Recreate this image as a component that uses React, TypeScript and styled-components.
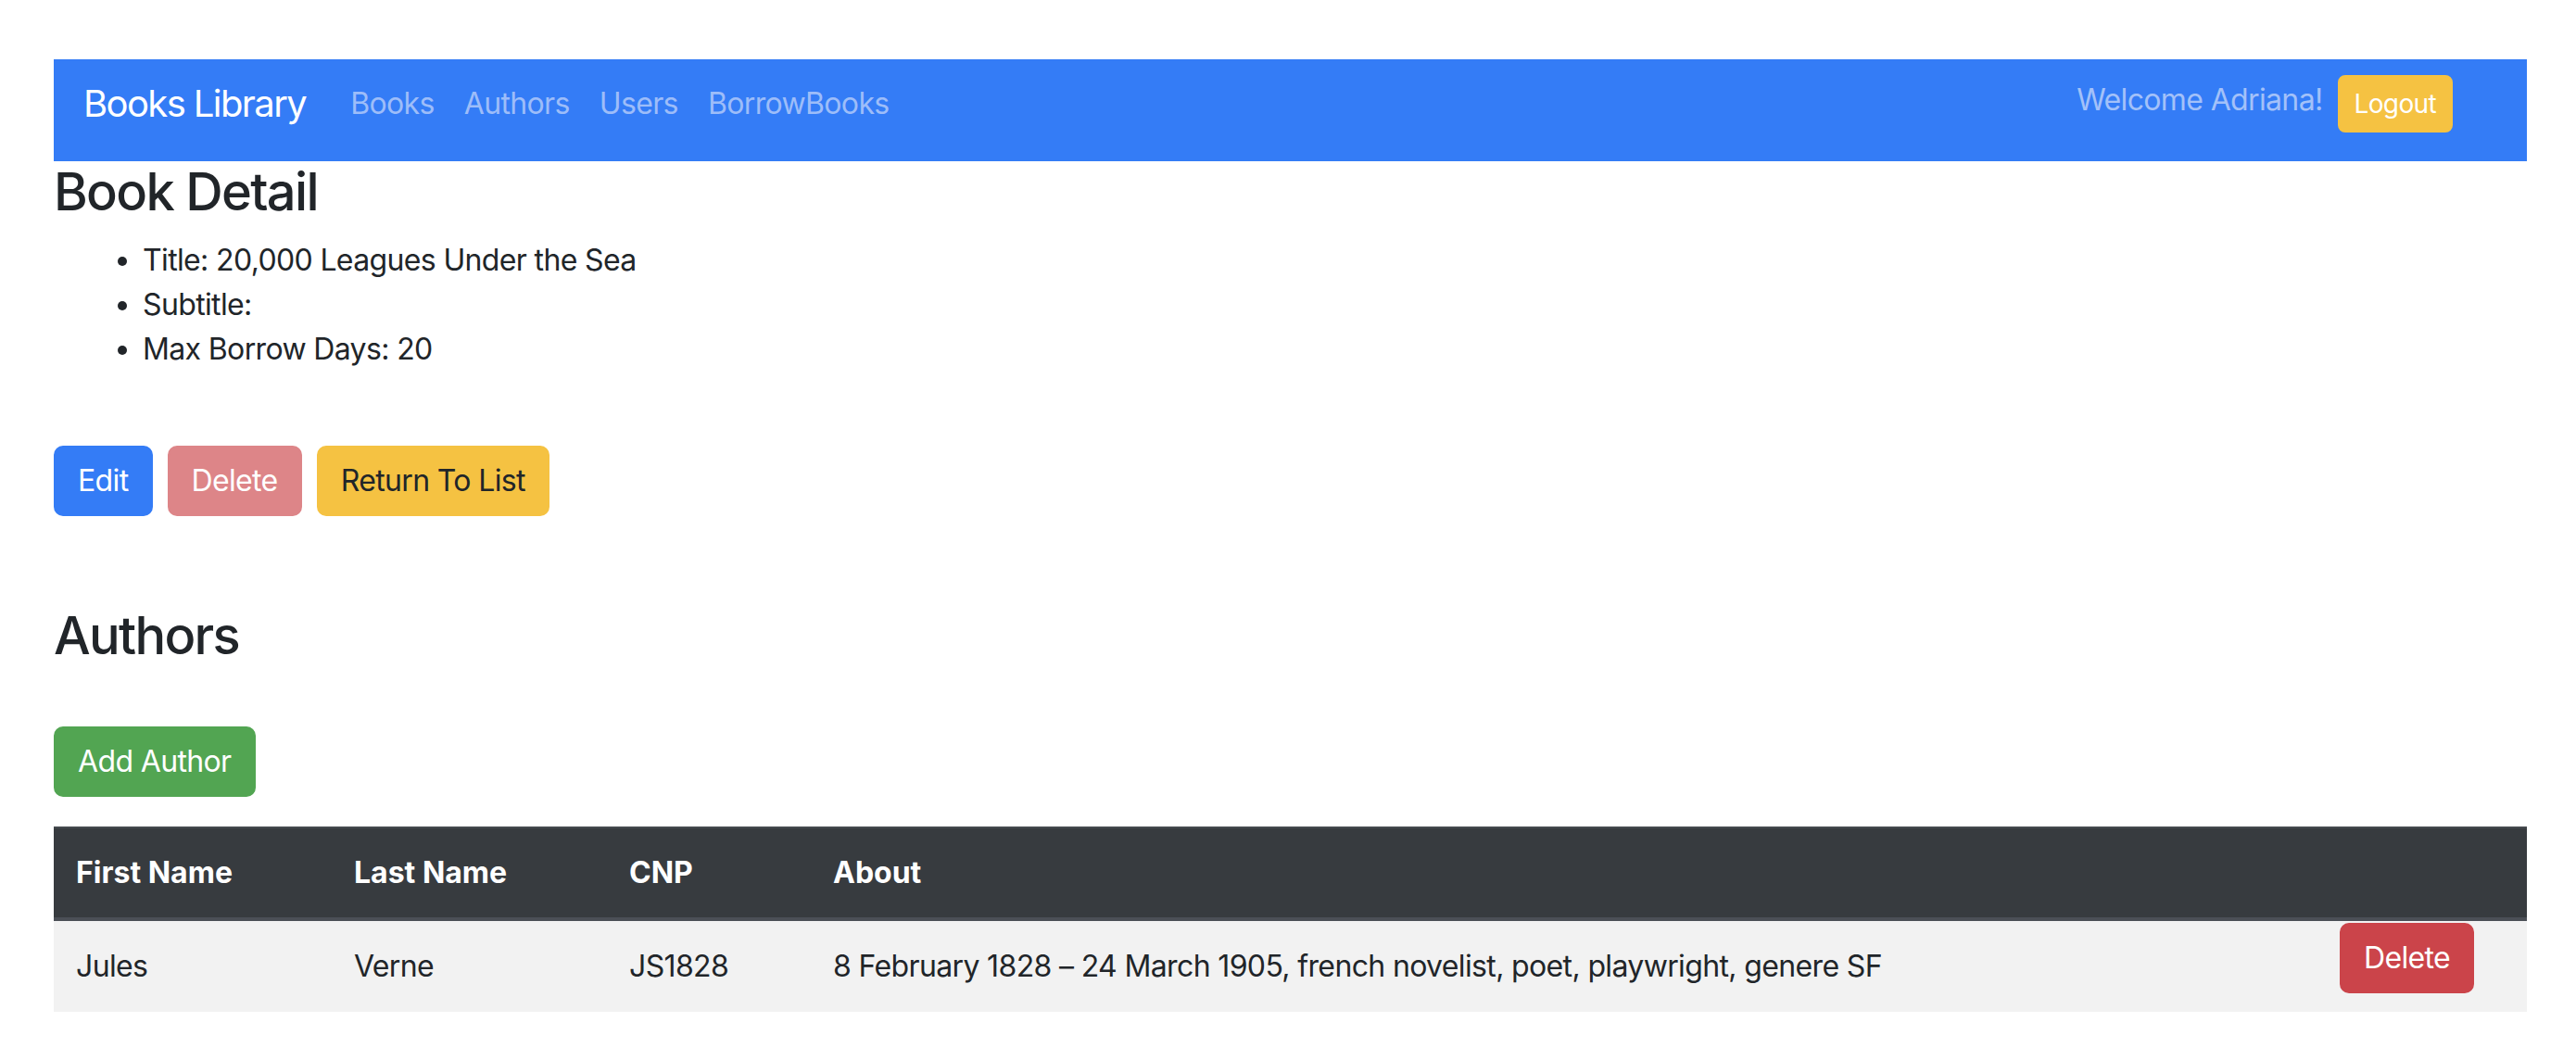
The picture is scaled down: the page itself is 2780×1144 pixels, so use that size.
import React from "react";
import styled, { createGlobalStyle } from "styled-components";

const GlobalStyle = createGlobalStyle`
  html, body { margin: 0; padding: 0; background: #ffffff; }
  body {
    font-family: Inter, "Noto Sans", "Liberation Sans", sans-serif;
    font-size: 32px;
    line-height: 1.5;
    color: #212529;
    letter-spacing: -0.02em;
  }
  * { box-sizing: border-box; }
`;

const Page = styled.div`
  padding: 64px 53px 40px 58px;
`;

const NavBar = styled.nav`
  height: 110px;
  background: #347cf6;
  display: flex;
  align-items: center;
  padding: 0 80px 14px 32px;
`;

const Brand = styled.a`
  font-size: 40px;
  line-height: 60px;
  letter-spacing: -0.04em;
  color: #ffffff;
  margin-right: 32px;
  text-decoration: none;
  white-space: nowrap;
`;

const NavList = styled.div`
  display: flex;
  align-items: center;
`;

const NavLink = styled.a`
  font-size: 32px;
  line-height: 48px;
  padding: 0 16px;
  color: #9dbdf9;
  text-decoration: none;
  white-space: nowrap;
`;

const NavRight = styled.div`
  margin-left: auto;
  display: flex;
  align-items: center;
  gap: 16px;
`;

const Welcome = styled.span`
  font-size: 32px;
  line-height: 48px;
  color: #a3c1f9;
  margin-bottom: 9px;
  white-space: nowrap;
`;

const Heading = styled.h3<{ $mb?: number }>`
  font-size: 56px;
  font-weight: 500;
  line-height: 1.2;
  letter-spacing: -0.03em;
  margin: 0 0 ${(p) => p.$mb ?? 16}px 0;
`;

const DetailList = styled.ul`
  margin: 0 0 80px 0;
  padding-left: 96px;
  list-style: disc;
`;

const ButtonRow = styled.div`
  display: flex;
  gap: 16px;
  margin-bottom: 96px;
`;

type Variant = "primary" | "dangerFaded" | "warning" | "success" | "danger" | "warningSm";

const variants: Record<Variant, { bg: string; fg: string }> = {
  primary: { bg: "#347cf6", fg: "#ffffff" },
  dangerFaded: { bg: "#dd8588", fg: "#ffffff" },
  warning: { bg: "#f5c242", fg: "#212529" },
  success: { bg: "#52a552", fg: "#ffffff" },
  danger: { bg: "#cb444a", fg: "#ffffff" },
  warningSm: { bg: "#f5c242", fg: "#ffffff" },
};

const Button = styled.button<{ $variant: Variant; $small?: boolean }>`
  font-family: inherit;
  letter-spacing: inherit;
  font-size: ${(p) => (p.$small ? 28 : 32)}px;
  line-height: ${(p) => (p.$small ? 42 : 48)}px;
  padding: ${(p) => (p.$small ? "8px 16px" : "12px 24px")};
  border: 2px solid ${(p) => variants[p.$variant].bg};
  border-radius: ${(p) => (p.$small ? 8 : 10)}px;
  background: ${(p) => variants[p.$variant].bg};
  color: ${(p) => variants[p.$variant].fg};
  white-space: nowrap;
  cursor: pointer;
`;

const AddRow = styled.div`
  margin: 64px 0 32px 0;
`;

const Table = styled.table`
  width: 100%;
  border-collapse: collapse;
  table-layout: fixed;
`;

const HeadRow = styled.tr`
  background: #373b3f;
  border-top: 2px solid #45494e;
  border-bottom: 4px solid #4b4f56;
`;

const Th = styled.th<{ $w?: number }>`
  ${(p) => (p.$w ? `width: ${p.$w}px;` : "")}
  text-align: left;
  font-weight: 700;
  letter-spacing: 0;
  color: #ffffff;
  padding: 24px;
  line-height: 48px;
  vertical-align: middle;
`;

const BodyRow = styled.tr`
  background: #f2f2f2;
`;

const Td = styled.td`
  padding: 24px;
  line-height: 48px;
  vertical-align: middle;
  color: #212529;
`;

const ActionTd = styled.td`
  padding: 2px 24px 20px 24px;
  vertical-align: top;
`;

export default function App() {
  return (
    <>
      <GlobalStyle />
      <Page>
        <NavBar>
          <Brand href="#">Books Library</Brand>
          <NavList>
            <NavLink href="#">Books</NavLink>
            <NavLink href="#">Authors</NavLink>
            <NavLink href="#">Users</NavLink>
            <NavLink href="#">BorrowBooks</NavLink>
          </NavList>
          <NavRight>
            <Welcome>Welcome Adriana!</Welcome>
            <Button $variant="warningSm" $small>
              Logout
            </Button>
          </NavRight>
        </NavBar>

        <Heading>Book Detail</Heading>
        <DetailList>
          <li>Title: 20,000 Leagues Under the Sea</li>
          <li>Subtitle:</li>
          <li>Max Borrow Days: 20</li>
        </DetailList>

        <ButtonRow>
          <Button $variant="primary">Edit</Button>
          <Button $variant="dangerFaded">Delete</Button>
          <Button $variant="warning">Return To List</Button>
        </ButtonRow>

        <Heading $mb={0}>Authors</Heading>
        <AddRow>
          <Button $variant="success">Add Author</Button>
        </AddRow>

        <Table>
          <thead>
            <HeadRow>
              <Th $w={300}>First Name</Th>
              <Th $w={297}>Last Name</Th>
              <Th $w={220}>CNP</Th>
              <Th>About</Th>
              <Th $w={226}></Th>
            </HeadRow>
          </thead>
          <tbody>
            <BodyRow>
              <Td>Jules</Td>
              <Td>Verne</Td>
              <Td>JS1828</Td>
              <Td>8 February 1828 – 24 March 1905, french novelist, poet, playwright, genere SF</Td>
              <ActionTd>
                <Button $variant="danger">Delete</Button>
              </ActionTd>
            </BodyRow>
          </tbody>
        </Table>
      </Page>
    </>
  );
}
